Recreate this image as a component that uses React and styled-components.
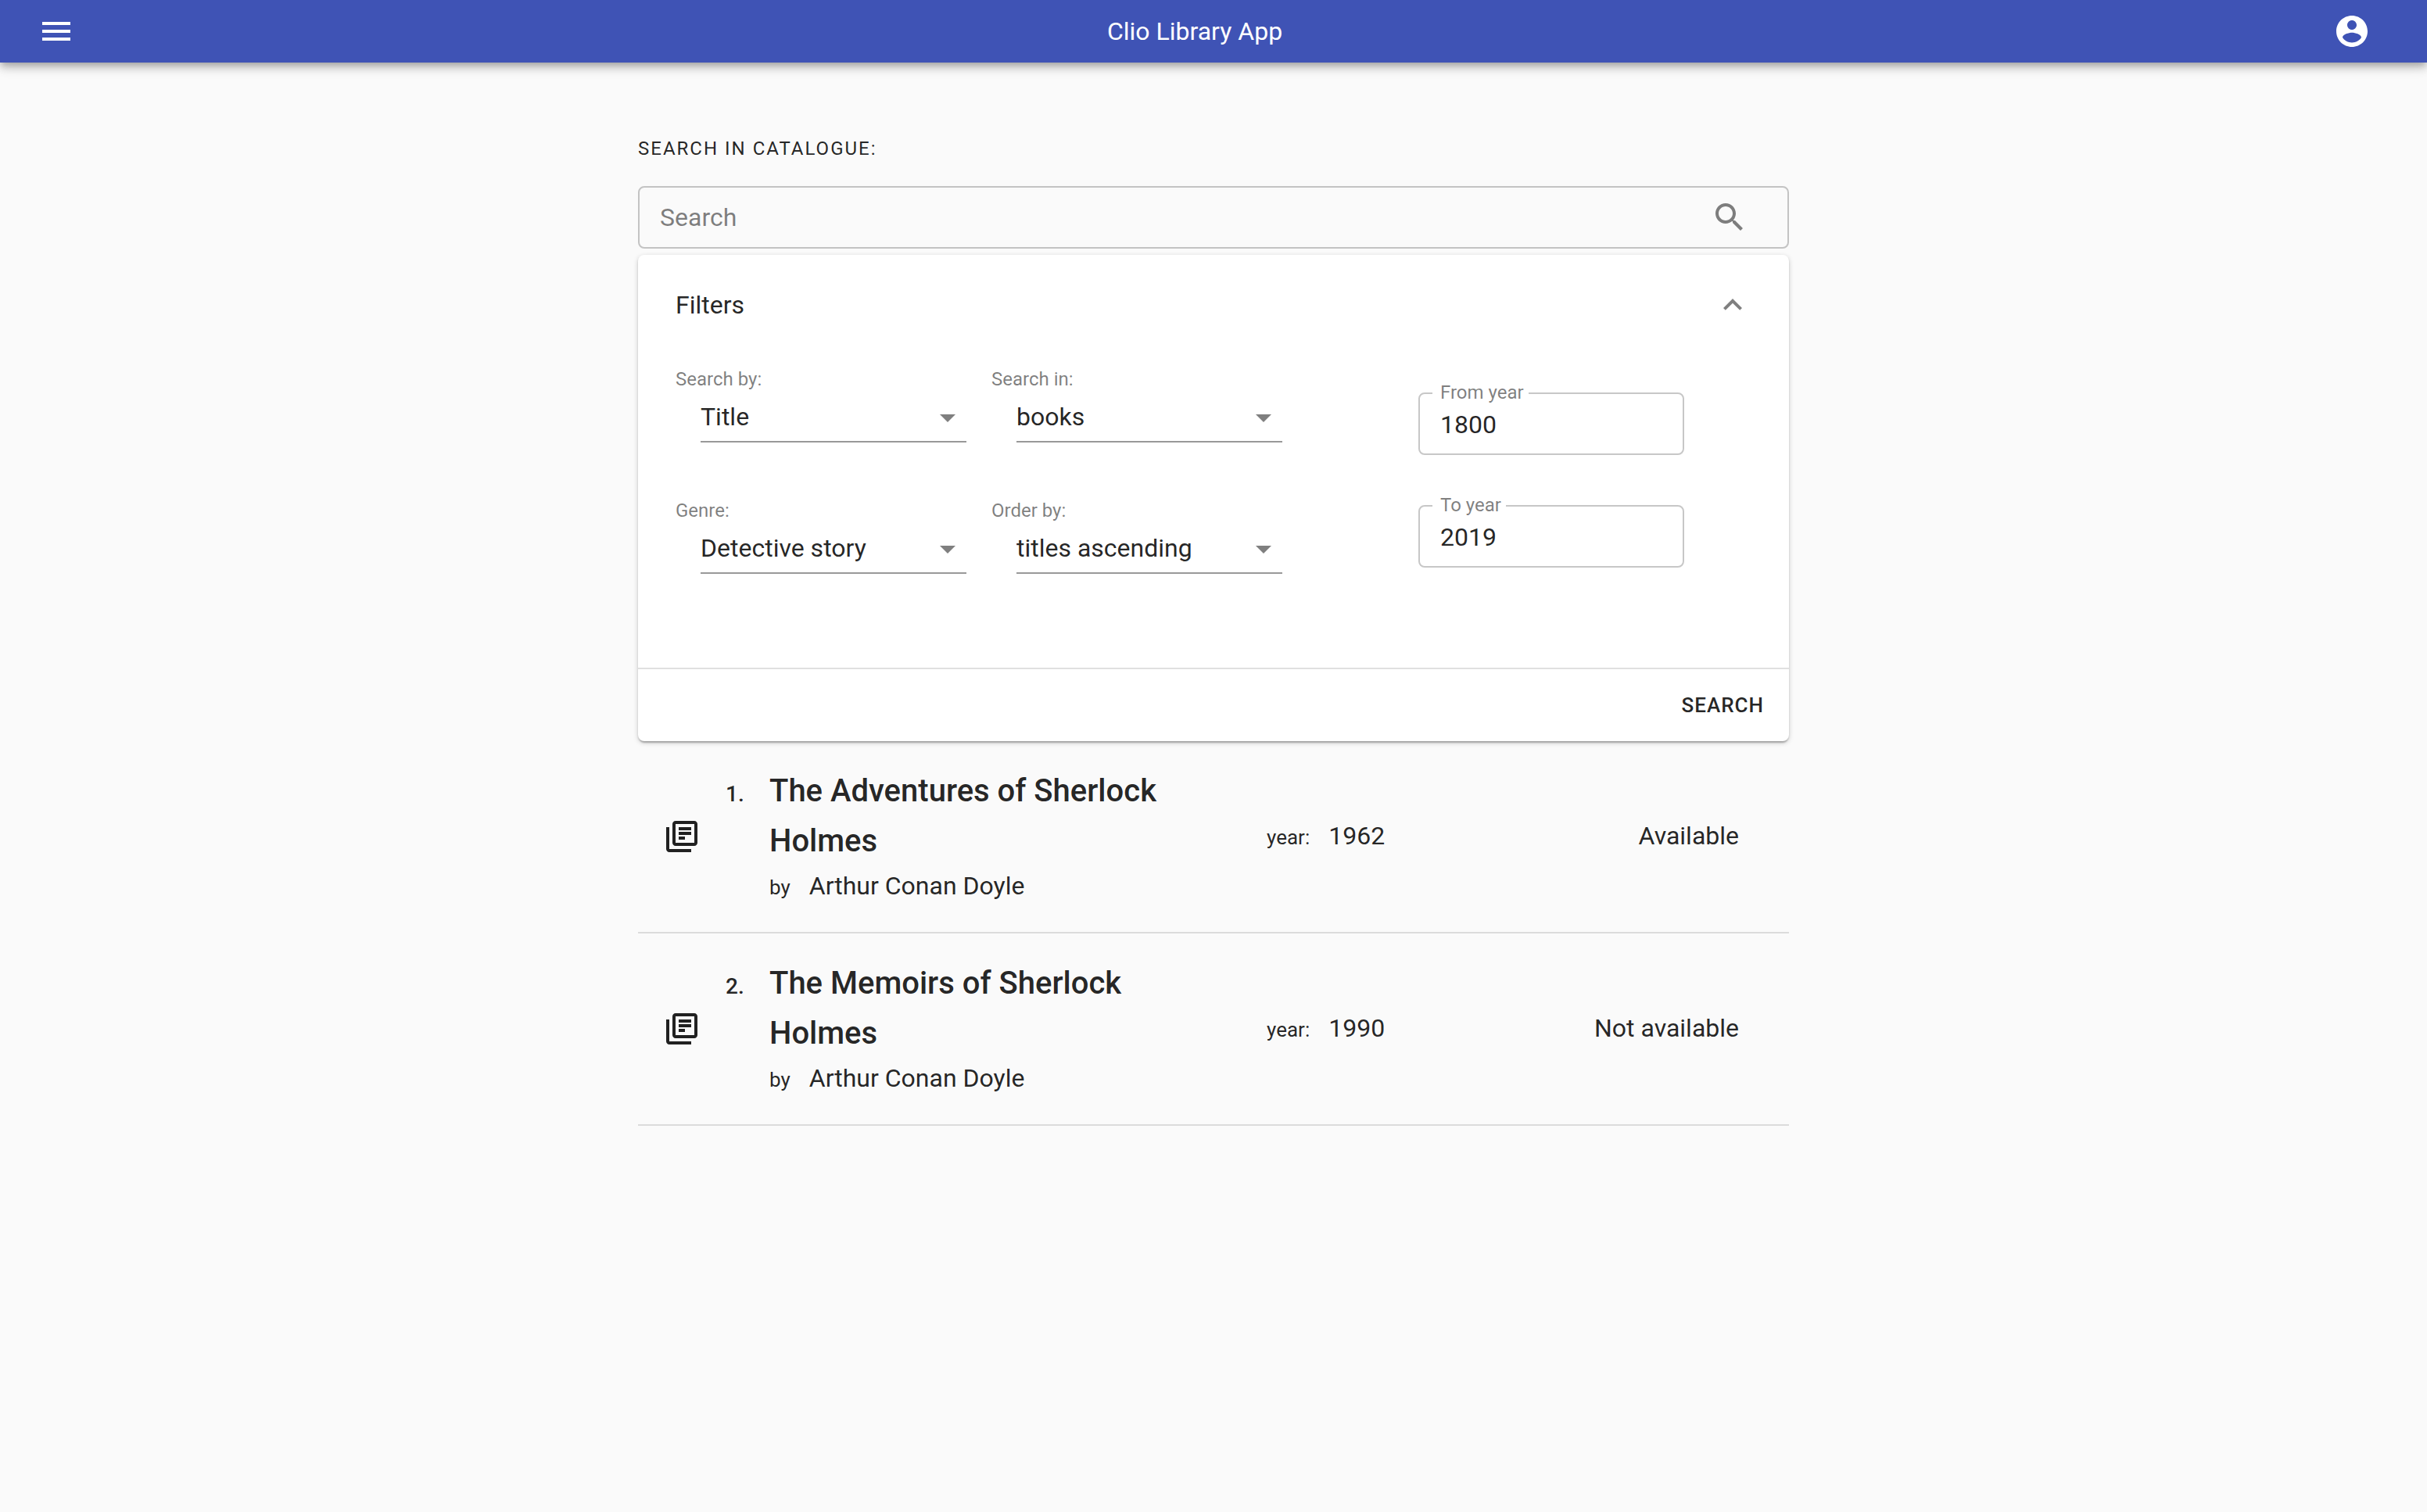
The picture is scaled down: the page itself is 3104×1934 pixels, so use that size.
import React from "react";
import styled, { createGlobalStyle } from "styled-components";

const GlobalStyle = createGlobalStyle`
  *, *::before, *::after { box-sizing: border-box; }
  body {
    margin: 0;
    background: #fafafa;
    color: rgba(0, 0, 0, 0.87);
    font-family: Roboto, "Liberation Sans", sans-serif;
    font-size: 32px;
    line-height: 38px;
    -webkit-font-smoothing: antialiased;
  }
  button, input, select { font: inherit; color: inherit; }
`;

const Icon = styled.svg.attrs({ viewBox: "0 0 24 24", "aria-hidden": true })`
  display: block;
  flex: none;
  width: 48px;
  height: 48px;
  fill: currentColor;
`;

const AppBar = styled.header`
  display: flex;
  align-items: center;
  justify-content: space-between;
  height: 80px;
  padding: 0 48px;
  background: #3f53b5;
  color: #fff;
  box-shadow: 0 4px 8px -2px rgba(0, 0, 0, 0.2), 0 8px 10px 0 rgba(0, 0, 0, 0.14),
    0 2px 20px 0 rgba(0, 0, 0, 0.12);
`;

const AppTitle = styled.h1`
  margin: 0;
  font-size: 32px;
  font-weight: 400;
  line-height: 48px;
`;

const IconButton = styled.button`
  padding: 0 ${(p) => p.$inset || 0};
  border: 0;
  background: none;
  color: inherit;
  cursor: pointer;
`;

const Main = styled.main`
  max-width: 1472px;
  margin: 0 auto;
  padding-top: 78px;
`;

const Overline = styled.label`
  display: block;
  margin-bottom: 16px;
  font-size: 24px;
  line-height: 64px;
  letter-spacing: 2px;
  text-transform: uppercase;
`;

const SearchBox = styled.div`
  display: flex;
  align-items: center;
  height: 80px;
  padding: 0 50px 0 26px;
  border: 2px solid rgba(0, 0, 0, 0.22);
  border-radius: 8px;
  color: rgba(0, 0, 0, 0.5);
`;

const SearchInput = styled.input`
  flex: 1;
  min-width: 0;
  height: 38px;
  padding: 0;
  border: 0;
  outline: 0;
  background: none;
  color: rgba(0, 0, 0, 0.87);
  &::placeholder { color: rgba(0, 0, 0, 0.5); opacity: 1; }
`;

const Panel = styled.form`
  margin-top: 8px;
  border-radius: 8px;
  background: #fff;
  box-shadow: 0 2px 6px 0 rgba(0, 0, 0, 0.2), 0 2px 2px 0 rgba(0, 0, 0, 0.14),
    0 4px 2px -2px rgba(0, 0, 0, 0.12);
`;

const PanelSummary = styled.button`
  display: flex;
  align-items: center;
  justify-content: space-between;
  width: 100%;
  height: 128px;
  padding: 0 48px;
  border: 0;
  background: none;
  text-align: left;
  cursor: pointer;
  ${Icon} { color: rgba(0, 0, 0, 0.5); }
`;

const PanelDetails = styled.div`
  display: flex;
  padding: 16px 48px 120px;
`;

const SelectGrid = styled.div`
  display: grid;
  grid-template-columns: 404px 404px;
  row-gap: 72px;
`;

const FieldLabel = styled.label`
  display: block;
  margin-bottom: 2px;
  font-size: 24px;
  line-height: 30px;
  color: rgba(0, 0, 0, 0.5);
`;

const SelectBox = styled.div`
  position: relative;
  margin: 0 32px;
  ${Icon} {
    position: absolute;
    top: 8px;
    right: 0;
    color: rgba(0, 0, 0, 0.5);
    pointer-events: none;
  }
`;

const Select = styled.select`
  display: block;
  width: 100%;
  height: 64px;
  padding: 12px 48px 12px 0;
  border: 0;
  border-bottom: 2px solid rgba(0, 0, 0, 0.4);
  border-radius: 0;
  outline: 0;
  appearance: none;
  background: none;
  cursor: pointer;
`;

const YearFields = styled.div`
  display: grid;
  align-content: start;
  row-gap: 64px;
  width: 340px;
  margin: 32px 0 0 142px;
`;

const YearField = styled.div`
  position: relative;
`;

const YearLabel = styled.label`
  position: absolute;
  top: -14px;
  left: 18px;
  padding: 0 6px 0 10px;
  background: #fff;
  color: rgba(0, 0, 0, 0.5);
  font-size: 24px;
  line-height: 28px;
`;

const YearInput = styled.input`
  display: block;
  width: 100%;
  height: 80px;
  padding: 2px 26px 0;
  border: 2px solid rgba(0, 0, 0, 0.22);
  border-radius: 8px;
  outline: 0;
  background: none;
`;

const PanelActions = styled.div`
  display: flex;
  align-items: center;
  justify-content: flex-end;
  height: 94px;
  padding: 0 16px;
  border-top: 2px solid rgba(0, 0, 0, 0.12);
`;

const TextButton = styled.button`
  padding: 8px 16px;
  border: 0;
  border-radius: 8px;
  background: none;
  font-size: 26px;
  font-weight: 500;
  line-height: 44px;
  letter-spacing: 1px;
  text-transform: uppercase;
  cursor: pointer;
`;

const Results = styled.ol`
  margin: 0;
  padding: 0;
  list-style: none;
`;

const Result = styled.li`
  display: grid;
  grid-template-columns: 48px 24px minmax(0, 1fr) minmax(0, 1fr);
  column-gap: 32px;
  align-items: center;
  padding: 32px 64px 32px 32px;
  border-bottom: 2px solid rgba(0, 0, 0, 0.12);
`;

const Ordinal = styled.span`
  align-self: baseline;
  font-size: 28px;
  font-weight: 500;
`;

const Work = styled.div`
  align-self: baseline;
  padding-right: 32px;
`;

const WorkTitle = styled.h2`
  margin: 0;
  font-size: 40px;
  font-weight: 500;
  line-height: 64px;
`;

const Pair = styled.div`
  display: flex;
  align-items: baseline;
  gap: 24px;
  line-height: 50px;
`;

const Caption = styled.span`
  font-size: 26px;
`;

const Facts = styled.div`
  display: flex;
  align-items: baseline;
  justify-content: space-between;
`;

const filters = [
  { id: "search-by", label: "Search by:", value: "Title", options: ["Title", "Author"] },
  { id: "search-in", label: "Search in:", value: "books", options: ["books", "authors"] },
  { id: "genre", label: "Genre:", value: "Detective story", options: ["Detective story", "Novel"] },
  {
    id: "order-by",
    label: "Order by:",
    value: "titles ascending",
    options: ["titles ascending", "titles descending"],
  },
];

const years = [
  { id: "from-year", label: "From year", value: "1800" },
  { id: "to-year", label: "To year", value: "2019" },
];

const books = [
  {
    title: "The Adventures of Sherlock Holmes",
    author: "Arthur Conan Doyle",
    year: 1962,
    status: "Available",
  },
  {
    title: "The Memoirs of Sherlock Holmes",
    author: "Arthur Conan Doyle",
    year: 1990,
    status: "Not available",
  },
];

function FilterSelect({ id, label, value, options }) {
  return (
    <div>
      <FieldLabel htmlFor={id}>{label}</FieldLabel>
      <SelectBox>
        <Select id={id} defaultValue={value}>
          {options.map((option) => (
            <option key={option}>{option}</option>
          ))}
        </Select>
        <Icon>
          <path d="M7 10l5 5 5-5z" />
        </Icon>
      </SelectBox>
    </div>
  );
}

function Book({ number, title, author, year, status }) {
  return (
    <Result>
      <Icon>
        <path d="M4 6H2v14c0 1.1.9 2 2 2h14v-2H4V6zm16-4H8c-1.1 0-2 .9-2 2v12c0 1.1.9 2 2 2h12c1.1 0 2-.9 2-2V4c0-1.1-.9-2-2-2zm0 14H8V4h12v12zM10 9h8v2h-8zm0 3h4v2h-4zm0-6h8v2h-8z" />
      </Icon>
      <Ordinal>{number}.</Ordinal>
      <Work>
        <WorkTitle>{title}</WorkTitle>
        <Pair>
          <Caption>by</Caption>
          <span>{author}</span>
        </Pair>
      </Work>
      <Facts>
        <Pair>
          <Caption>year:</Caption>
          <span>{year}</span>
        </Pair>
        <span>{status}</span>
      </Facts>
    </Result>
  );
}

export default function App() {
  return (
    <>
      <GlobalStyle />
      <AppBar>
        <IconButton type="button" aria-label="Menu">
          <Icon>
            <path d="M3 18h18v-2H3v2zm0-5h18v-2H3v2zm0-7v2h18V6H3z" />
          </Icon>
        </IconButton>
        <AppTitle>Clio Library App</AppTitle>
        <IconButton type="button" aria-label="Account" $inset="24px">
          <Icon>
            <path d="M12 2C6.48 2 2 6.48 2 12s4.48 10 10 10 10-4.480 10-10S17.520 2 12 2zm0 3c1.660 0 3 1.340 3 3s-1.340 3-3 3-3-1.340-3-3 1.340-3 3-3zm0 14.200c-2.500 0-4.710-1.280-6-3.220.030-1.990 4-3.080 6-3.080 1.990 0 5.970 1.090 6 3.080-1.290 1.940-3.500 3.220-6 3.220z" />
          </Icon>
        </IconButton>
      </AppBar>
      <Main>
        <Overline htmlFor="catalogue-search">Search in catalogue:</Overline>
        <SearchBox>
          <SearchInput id="catalogue-search" type="text" placeholder="Search" />
          <IconButton type="button" aria-label="Search">
            <Icon>
              <path d="M15.500 14h-.790l-.280-.270C15.410 12.590 16 11.110 16 9.500 16 5.910 13.090 3 9.500 3S3 5.910 3 9.500 5.910 16 9.500 16c1.610 0 3.090-.590 4.230-1.570l.270.280v.790l5 4.990L20.490 19l-4.990-5zm-6 0C7.010 14 5 11.990 5 9.500S7.010 5 9.500 5 14 7.010 14 9.500 11.990 14 9.500 14z" />
            </Icon>
          </IconButton>
        </SearchBox>
        <Panel onSubmit={(event) => event.preventDefault()}>
          <PanelSummary type="button" aria-expanded="true">
            Filters
            <Icon>
              <path d="M12 8l-6 6 1.410 1.410L12 10.830l4.590 4.580L18 14z" />
            </Icon>
          </PanelSummary>
          <PanelDetails>
            <SelectGrid>
              {filters.map((filter) => (
                <FilterSelect key={filter.id} {...filter} />
              ))}
            </SelectGrid>
            <YearFields>
              {years.map(({ id, label, value }) => (
                <YearField key={id}>
                  <YearInput id={id} type="text" inputMode="numeric" defaultValue={value} />
                  <YearLabel htmlFor={id}>{label}</YearLabel>
                </YearField>
              ))}
            </YearFields>
          </PanelDetails>
          <PanelActions>
            <TextButton type="submit">Search</TextButton>
          </PanelActions>
        </Panel>
        <Results>
          {books.map((book, index) => (
            <Book key={book.title} number={index + 1} {...book} />
          ))}
        </Results>
      </Main>
    </>
  );
}
